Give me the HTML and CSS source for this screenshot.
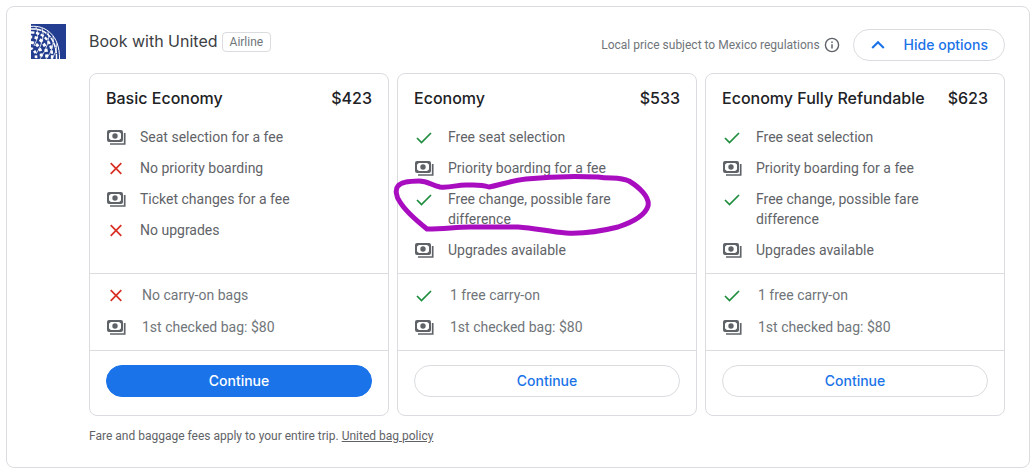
FILE: index.html
```html
<!DOCTYPE html>
<html lang="en">

<head>
  <meta charset="utf-8">
  <meta name="viewport" content="width=device-width, initial-scale=1.0">
  <title>Book with United</title>
  <link rel="stylesheet" href="styles.css">
</head>

<body>
  <!-- shared icons -->
  <svg class="sprite" aria-hidden="true">
    <symbol id="icon-fee" viewBox="0 0 20 20">
      <rect x="2" y="4" width="14" height="10" rx="1" fill="none" stroke="currentColor" stroke-width="2" />
      <path d="M2 4h4L2 7.500zM16 4h-4L16 7.500zM2 14h4L2 10.500zM16 14h-4L16 10.500z" fill="currentColor" />
      <circle cx="9" cy="9" r="2.700" fill="currentColor" />
      <path d="M18.700 6v11H4" fill="none" stroke="currentColor" stroke-width="1.700" />
    </symbol>
    <symbol id="icon-yes" viewBox="0 0 20 20">
      <path d="M3 11l4.500 4.500L17 6" fill="none" stroke="currentColor" stroke-width="1.700" />
    </symbol>
    <symbol id="icon-no" viewBox="0 0 20 20">
      <path d="M4.700 5.200l10.600 10.600M15.300 5.200L4.700 15.800" fill="none" stroke="currentColor" stroke-width="1.700" />
    </symbol>
  </svg>

  <main class="booking">
    <svg class="logo" viewBox="0 0 35 35" role="img" aria-label="United">
      <rect width="35" height="35" fill="#233e90" />
      <g fill="none" stroke="#fff">
        <path d="M0 2.400C14 1 29 11 28.500 35" stroke-width="1" />
        <path d="M0 5C13 4 26 13 25.500 35" stroke-width="1.500" stroke-dasharray="5 .7" />
        <path d="M0 8.500C11 8 22 16 21 35" stroke-width="2.400" stroke-dasharray="3.400 1.600" />
        <path d="M0 13C9 13 17 20 15.500 35" stroke-width="3" stroke-dasharray="3.200 2.400" stroke-dashoffset="2" />
        <path d="M0 18.500C6 19 11.500 25 10 35" stroke-width="3" stroke-dasharray="3 2.400" />
        <path d="M0 24.500C3 25 5.500 29 5 35" stroke-width="2.600" stroke-dasharray="2.800 2.200" stroke-dashoffset="1" />
        <path d="M5 3Q9 11 3 22M11 4Q15 15 5 30M17 7Q20 19 9 35M22 12Q24 24 15 35M26 19Q26 28 21 35" stroke-width=".8" />
      </g>
    </svg>

    <div class="content">
      <header class="header">
        <h1 class="title">Book with United</h1>
        <span class="tag">Airline</span>
        <div class="header-right">
          <span class="notice">Local price subject to Mexico regulations</span>
          <svg class="info" viewBox="0 0 16 16" aria-hidden="true">
            <circle cx="8" cy="8" r="6.600" fill="none" stroke="currentColor" stroke-width="1.400" />
            <path d="M8 7.200v4.300M8 4.400v1.500" stroke="currentColor" stroke-width="1.500" />
          </svg>
          <button class="btn btn-toggle" type="button">
            <svg class="chevron" viewBox="0 0 16 16" aria-hidden="true">
              <path d="M2.200 11L8 5.200 13.800 11" fill="none" stroke="currentColor" stroke-width="2.100" />
            </svg>
            Hide options
          </button>
        </div>
      </header>

      <div class="fares">
        <section class="fare">
          <div class="fare-head">
            <h2>Basic Economy</h2>
            <span>$423</span>
          </div>
          <ul class="features">
            <li><svg class="icon"><use href="#icon-fee" /></svg>Seat selection for a fee</li>
            <li><svg class="icon no"><use href="#icon-no" /></svg>No priority boarding</li>
            <li><svg class="icon"><use href="#icon-fee" /></svg>Ticket changes for a fee</li>
            <li><svg class="icon no"><use href="#icon-no" /></svg>No upgrades</li>
          </ul>
          <ul class="bags">
            <li><svg class="icon no"><use href="#icon-no" /></svg>No carry-on bags</li>
            <li><svg class="icon"><use href="#icon-fee" /></svg>1st checked bag: $80</li>
          </ul>
          <div class="fare-action">
            <button class="btn btn-primary" type="button">Continue</button>
          </div>
        </section>

        <section class="fare">
          <div class="fare-head">
            <h2>Economy</h2>
            <span>$533</span>
          </div>
          <ul class="features">
            <li><svg class="icon yes"><use href="#icon-yes" /></svg>Free seat selection</li>
            <li><svg class="icon"><use href="#icon-fee" /></svg>Priority boarding for a fee</li>
            <li><svg class="icon yes"><use href="#icon-yes" /></svg>Free change, possible fare difference</li>
            <li><svg class="icon"><use href="#icon-fee" /></svg>Upgrades available</li>
          </ul>
          <ul class="bags">
            <li><svg class="icon yes"><use href="#icon-yes" /></svg>1 free carry-on</li>
            <li><svg class="icon"><use href="#icon-fee" /></svg>1st checked bag: $80</li>
          </ul>
          <div class="fare-action">
            <button class="btn" type="button">Continue</button>
          </div>
          <!-- pen mark round the change policy -->
          <svg class="pen" viewBox="390 170 264 70" aria-hidden="true">
            <path d="M489 187C480 184 474 185 466 185C456 185 450 188 440 187C431 185 428 181 419 181C410 181 401 182 398 186C395 189 396 197 400 202C406 212 417 221 427 229C445 229 455 227 470 227H518C535 228 550 232 566 233C585 234 602 231 618 227C633 222 645 216 648 206C650 197 639 187 629 181C620 177 612 179 598 177C577 176 545 177 526 179C510 181 500 185 489 187Z" />
          </svg>
        </section>

        <section class="fare">
          <div class="fare-head">
            <h2>Economy Fully Refundable</h2>
            <span>$623</span>
          </div>
          <ul class="features">
            <li><svg class="icon yes"><use href="#icon-yes" /></svg>Free seat selection</li>
            <li><svg class="icon"><use href="#icon-fee" /></svg>Priority boarding for a fee</li>
            <li><svg class="icon yes"><use href="#icon-yes" /></svg>Free change, possible fare difference</li>
            <li><svg class="icon"><use href="#icon-fee" /></svg>Upgrades available</li>
          </ul>
          <ul class="bags">
            <li><svg class="icon yes"><use href="#icon-yes" /></svg>1 free carry-on</li>
            <li><svg class="icon"><use href="#icon-fee" /></svg>1st checked bag: $80</li>
          </ul>
          <div class="fare-action">
            <button class="btn" type="button">Continue</button>
          </div>
        </section>
      </div>

      <p class="footnote">Fare and baggage fees apply to your entire trip. <a href="#">United bag policy</a></p>
    </div>
  </main>
</body>

</html>
```

FILE: styles.css
```css
* {
  box-sizing: border-box;
}

body {
  margin: 6px;
  background-color: #fff;
  color: #5f6368;
  font: 14px/20px Roboto, sans-serif;
}

h1,
h2,
p,
ul {
  margin: 0;
  padding: 0;
}

ul {
  list-style: none;
}

.sprite {
  position: absolute;
  width: 0;
  height: 0;
}

.booking {
  display: flex;
  align-items: flex-start;
  gap: 23px;
  padding: 17px 24px 23px;
  border: 1px solid #dadce0;
  border-radius: 8px;
}

.logo {
  flex: none;
  width: 35px;
  height: 35px;
}

.content {
  flex: 1;
  min-width: 0;
}

.header {
  display: flex;
  align-items: flex-start;
  gap: 4px;
  padding: 5px 0 12px;
}

.title {
  color: #3c4043;
  font: 400 16px/24px Inter, sans-serif;
}

.tag {
  margin-top: 3px;
  padding: 0 7px;
  border: 1px solid #dadce0;
  border-radius: 4px;
  color: #70757a;
  font-size: 12px;
  line-height: 18px;
}

.header-right {
  display: flex;
  align-items: center;
  margin-left: auto;
}

.notice {
  color: #70757a;
  font-size: 12px;
}

.info {
  width: 16px;
  height: 16px;
  margin: 0 13px 0 4px;
}

.btn {
  width: 100%;
  height: 32px;
  border: 1px solid #dadce0;
  border-radius: 16px;
  background-color: #fff;
  color: #1a73e8;
  font: 500 14px/20px Inter, sans-serif;
  cursor: pointer;
}

.btn-toggle {
  display: flex;
  align-items: center;
  gap: 18px;
  width: auto;
  padding: 0 16px;
}

.btn-primary {
  border-color: #1a73e8;
  background-color: #1a73e8;
  color: #fff;
}

.chevron {
  width: 16px;
  height: 16px;
}

.fares {
  display: grid;
  grid-template-columns: repeat(3, 1fr);
  gap: 8px;
}

.fare {
  position: relative;
  display: flex;
  flex-direction: column;
  border: 1px solid #dadce0;
  border-radius: 8px;
}

.fare-head {
  display: flex;
  justify-content: space-between;
  padding: 14px 16px 0;
  color: #202124;
  font: 500 16px/20px Inter, sans-serif;
}

.fare-head h2 {
  font: inherit;
}

.features,
.bags {
  display: flex;
  flex-direction: column;
}

.features {
  flex: 1;
  gap: 11px;
  padding: 19px 64px 13px 16px;
}

.bags {
  gap: 12px;
  padding: 11px 16px 13px;
  border: 1px solid #dadce0;
  border-width: 1px 0;
  color: #70757a;
}

.features li,
.bags li {
  display: flex;
  gap: 14px;
}

.bags li {
  gap: 16px;
}

.icon {
  flex: none;
  width: 20px;
  height: 20px;
  color: #5f6368;
}

.yes {
  color: #1e8e3e;
}

.no {
  color: #d93025;
}

.fare-action {
  padding: 14px 16px 18px;
}

.pen {
  position: absolute;
  top: 96px;
  left: -8px;
  width: 264px;
  height: 70px;
  fill: none;
  stroke: #a80dc0;
  stroke-width: 5;
  stroke-linejoin: round;
  pointer-events: none;
}

.footnote {
  margin-top: 12px;
  font-size: 12px;
  line-height: 16px;
}

.footnote a {
  color: inherit;
}
```
